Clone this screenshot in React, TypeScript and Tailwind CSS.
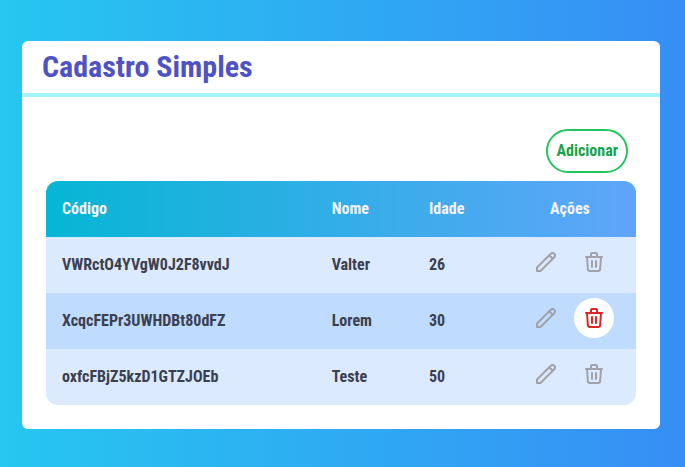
import React from "react";

type Cliente = { codigo: string; nome: string; idade: number; ativo?: boolean };

const clientes: Cliente[] = [
  { codigo: "VWRctO4YVgW0J2F8vvdJ", nome: "Valter", idade: 26 },
  { codigo: "XcqcFEPr3UWHDBt80dFZ", nome: "Lorem", idade: 30, ativo: true },
  { codigo: "oxfcFBjZ5kzD1GTZJOEb", nome: "Teste", idade: 50 },
];

function Icone({ d }: { d: string }) {
  return (
    <svg
      className="h-6 w-6"
      fill="none"
      viewBox="0 0 24 24"
      stroke="currentColor"
      strokeWidth={2}
      strokeLinecap="round"
      strokeLinejoin="round"
      aria-hidden="true"
    >
      <path d={d} />
    </svg>
  );
}

const LAPIS =
  "M15.232 5.232l3.536 3.536m-2.036-5.036a2.5 2.5 0 113.536 3.536L6.5 21.036H3v-3.572L16.732 3.732z";
const LIXEIRA =
  "M19 7l-.867 12.142A2 2 0 0116.138 21H7.862a2 2 0 01-1.995-1.858L5 7m5 4v6m4-6v6m1-10V4a1 1 0 00-1-1h-4a1 1 0 00-1 1v3M4 7h16";

function Tabela() {
  return (
    <table className="w-full table-fixed overflow-hidden rounded-xl">
      <colgroup>
        <col className="w-[45.7%]" />
        <col className="w-[16.5%]" />
        <col className="w-[15.4%]" />
        <col className="w-[22.4%]" />
      </colgroup>
      <thead className="bg-linear-to-r/srgb from-[#06b6d4] to-[#60a5fa] text-[#f3f4f6]">
        <tr>
          <th className="p-4 text-left font-bold">Código</th>
          <th className="p-4 text-left font-bold">Nome</th>
          <th className="p-4 text-left font-bold">Idade</th>
          <th className="p-4 text-center font-bold">Ações</th>
        </tr>
      </thead>
      <tbody>
        {clientes.map((c) => (
          <tr key={c.codigo} className="bg-[#dbeafe] even:bg-[#bfdbfe]">
            <td className="p-4">{c.codigo}</td>
            <td className="p-4">{c.nome}</td>
            <td className="p-4">{c.idade}</td>
            <td className="pt-[5px] pb-[11px] align-top">
              <div className="flex h-10 justify-center gap-2">
                <button
                  type="button"
                  aria-label="Editar"
                  className="rounded-full p-2 text-[#a1a1aa] hover:bg-white"
                >
                  <Icone d={LAPIS} />
                </button>
                <button
                  type="button"
                  aria-label="Excluir"
                  className={
                    c.ativo
                      ? "rounded-full bg-white p-2 text-[#dc2626]"
                      : "rounded-full p-2 text-[#a1a1aa] hover:bg-white"
                  }
                >
                  <Icone d={LIXEIRA} />
                </button>
              </div>
            </td>
          </tr>
        ))}
      </tbody>
    </table>
  );
}

export default function App() {
  return (
    <div className="min-h-screen bg-linear-to-r/srgb from-[#26c7f0] to-[#378ef5] pt-[41px] pr-[25px] pb-[38px] pl-[22px] font-['Roboto_Condensed','Liberation_Sans_Narrow',Roboto,sans-serif] text-base font-bold text-[#3b3f50]">
      <main className="rounded-md bg-white">
        <h1 className="border-b-4 border-[#a5f3fc] px-5 py-2 text-3xl text-[#4f52c4]">
          Cadastro Simples
        </h1>
        <div className="p-6">
          <div className="flex justify-end p-2">
            <button
              type="button"
              className="rounded-full border-2 border-[#22c55e] px-2 py-2 text-[#16a34a]"
            >
              Adicionar
            </button>
          </div>
          <Tabela />
        </div>
      </main>
    </div>
  );
}
